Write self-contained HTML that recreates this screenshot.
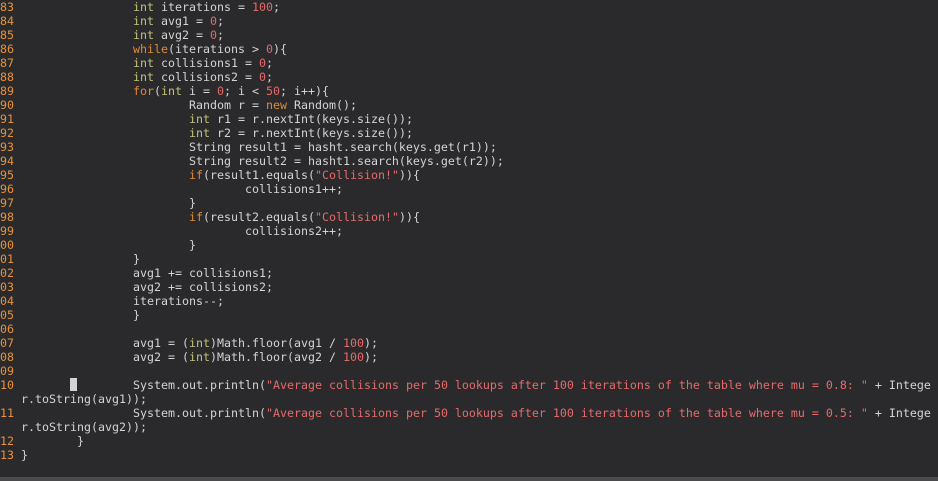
<!DOCTYPE html>
<html><head><style>
html,body{margin:0;padding:0;background:#2a2a2c;width:938px;height:481px;overflow:hidden}
pre{margin:0;position:absolute;left:0;top:0;font-family:"DejaVu Sans Mono","Liberation Mono",monospace;font-size:11.63px;line-height:14px;color:#d4d4d4}
.n{color:#e8923a}.k{color:#e08a38}.t{color:#c2c27a}.s{color:#e56b6b}
.cur{display:inline-block;width:7px;height:13px;background:#d4d4d4;vertical-align:-2px}
.bar{position:absolute;left:0;top:477px;width:938px;height:4px;background:#4a4a4c}
</style></head><body>
<pre><span class="n">83</span>                 <span class="t">int</span> iterations = <span class="s">100</span>;
<span class="n">84</span>                 <span class="t">int</span> avg1 = <span class="s">0</span>;
<span class="n">85</span>                 <span class="t">int</span> avg2 = <span class="s">0</span>;
<span class="n">86</span>                 <span class="k">while</span>(iterations &gt; <span class="s">0</span>){
<span class="n">87</span>                 <span class="t">int</span> collisions1 = <span class="s">0</span>;
<span class="n">88</span>                 <span class="t">int</span> collisions2 = <span class="s">0</span>;
<span class="n">89</span>                 <span class="k">for</span>(<span class="t">int</span> i = <span class="s">0</span>; i &lt; <span class="s">50</span>; i++){
<span class="n">90</span>                         Random r = <span class="k">new</span> Random();
<span class="n">91</span>                         <span class="t">int</span> r1 = r.nextInt(keys.size());
<span class="n">92</span>                         <span class="t">int</span> r2 = r.nextInt(keys.size());
<span class="n">93</span>                         String result1 = hasht.search(keys.get(r1));
<span class="n">94</span>                         String result2 = hasht1.search(keys.get(r2));
<span class="n">95</span>                         <span class="k">if</span>(result1.equals(<span class="s">"Collision!"</span>)){
<span class="n">96</span>                                 collisions1++;
<span class="n">97</span>                         }
<span class="n">98</span>                         <span class="k">if</span>(result2.equals(<span class="s">"Collision!"</span>)){
<span class="n">99</span>                                 collisions2++;
<span class="n">00</span>                         }
<span class="n">01</span>                 }
<span class="n">02</span>                 avg1 += collisions1;
<span class="n">03</span>                 avg2 += collisions2;
<span class="n">04</span>                 iterations--;
<span class="n">05</span>                 }
<span class="n">06</span>
<span class="n">07</span>                 avg1 = (<span class="t">int</span>)Math.floor(avg1 / <span class="s">100</span>);
<span class="n">08</span>                 avg2 = (<span class="t">int</span>)Math.floor(avg2 / <span class="s">100</span>);
<span class="n">09</span>
<span class="n">10</span>        <span class="cur"></span>        System.out.println(<span class="s">"Average collisions per 50 lookups after 100 iterations of the table where mu = 0.8: "</span> + Intege
   r.toString(avg1));
<span class="n">11</span>                 System.out.println(<span class="s">"Average collisions per 50 lookups after 100 iterations of the table where mu = 0.5: "</span> + Intege
   r.toString(avg2));
<span class="n">12</span>         }
<span class="n">13</span> }
</pre>
<div class="bar"></div>
</body></html>
